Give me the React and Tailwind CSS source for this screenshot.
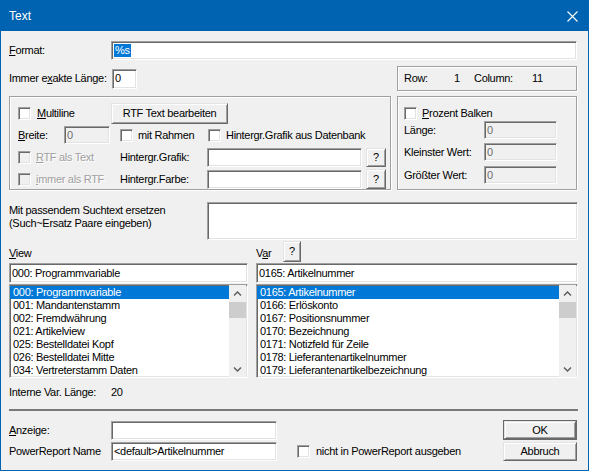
import React from 'react';

const sunken = 'border border-t-[#a0a0a0] border-l-[#a0a0a0] border-r-white border-b-white shadow-[inset_1px_1px_0_#696969,inset_-1px_-1px_0_#e3e3e3]';
const raised = 'border border-t-[#e3e3e3] border-l-[#e3e3e3] border-r-[#696969] border-b-[#696969] shadow-[inset_1px_1px_0_#fff,inset_-1px_-1px_0_#a0a0a0] bg-[#f0f0f0]';
const etched = 'border border-[#a0a0a0] shadow-[inset_1px_1px_0_#fff,1px_1px_0_#fff]';
const dim = 'text-[#a0a0a0] [text-shadow:1px_1px_0_#fff]';

const viewItems = [
  '000: Programmvariable',
  '001: Mandantenstamm',
  '002: Fremdwährung',
  '021: Artikelview',
  '025: Bestelldatei Kopf',
  '026: Bestelldatei Mitte',
  '034: Vertreterstamm Daten',
];

const varItems = [
  '0165: Artikelnummer',
  '0166: Erlöskonto',
  '0167: Positionsnummer',
  '0170: Bezeichnung',
  '0171: Notizfeld für Zeile',
  '0178: Lieferantenartikelnummer',
  '0179: Lieferantenartikelbezeichnung',
];

function Edit({ className = '', disabled, children }) {
  return (
    <div className={`box-border flex items-center pl-[2px] overflow-hidden whitespace-nowrap shrink-0 ${sunken} ${disabled ? 'bg-[#f0f0f0] text-[#6d6d6d]' : 'bg-white'} ${className}`}>
      {children}
    </div>
  );
}

function Check({ disabled }) {
  return <span className={`box-border block w-[13px] h-[13px] shrink-0 ${sunken} ${disabled ? 'bg-[#f0f0f0]' : 'bg-white'}`} />;
}

function Button({ className = '', children }) {
  return <div className={`box-border flex items-center justify-center shrink-0 ${raised} ${className}`}>{children}</div>;
}

function Chevron({ down }) {
  return (
    <svg width="9" height="6" viewBox="0 0 9 6">
      <polyline
        points={down ? '1,1.5 4.5,5 8,1.5' : '1,4.5 4.5,1 8,4.5'}
        fill="none"
        stroke="#606060"
        strokeWidth="1.5"
      />
    </svg>
  );
}

function ListBox({ items, className = '' }) {
  return (
    <div className={`box-border flex bg-white overflow-hidden shrink-0 ${sunken} ${className}`}>
      <div className="flex-1 pt-[1px] overflow-hidden">
        {items.map((it, i) => (
          <div key={it} className={`h-[13px] leading-[13px] pl-[3px] whitespace-nowrap ${i === 0 ? 'bg-[#0078d7] text-white' : ''}`}>
            {it}
          </div>
        ))}
      </div>
      <div className="w-[17px] flex flex-col bg-[#f0f0f0] mr-[1px]">
        <div className="h-[17px] flex items-center justify-center"><Chevron /></div>
        <div className="h-[16px] bg-[#cdcdcd]" />
        <div className="flex-1" />
        <div className="h-[17px] flex items-center justify-center"><Chevron down /></div>
      </div>
    </div>
  );
}

export default function App() {
  return (
    <div className="w-[589px] h-[471px] box-border border border-[#0063b1] bg-[#f0f0f0] overflow-hidden font-['Liberation_Sans',Arial,sans-serif] text-[11px] leading-[13px] tracking-[-0.3px] text-black">
      <div className="h-[30px] bg-[#0063b1] flex items-center pl-[8px] pr-[10px] text-white">
        <span className="text-[12px] tracking-normal">Text</span>
        <svg className="ml-auto" width="11" height="11" viewBox="0 0 11 11">
          <path d="M0.5 0.5 L10.5 10.5 M10.5 0.5 L0.5 10.5" stroke="#fff" strokeWidth="1.1" />
        </svg>
      </div>

      <div className="flex flex-col pl-[8px]">
        {/* Format */}
        <div className="mt-[10px] h-[19px] flex items-center">
          <span className="w-[102px]"><u>F</u>ormat:</span>
          <Edit className="w-[466px] h-[19px] pl-[2px]">
            <span className="bg-[#0078d7] text-white px-[1px]">%s</span>
          </Edit>
        </div>

        {/* exakte Länge + Row/Column */}
        <div className="mt-[6px] h-[25px] flex items-center">
          <div className="w-[388px] flex items-center">
            <span className="w-[103px]">Immer e<u>x</u>akte Länge:</span>
            <Edit className="w-[25px] h-[20px]">0</Edit>
          </div>
          <div className={`box-border w-[180px] h-[25px] flex items-center pl-[6px] ${etched}`}>
            <span className="w-[50px]">Row:</span>
            <span className="w-[20px]">1</span>
            <span className="w-[58px]">Column:</span>
            <span>11</span>
          </div>
        </div>

        {/* group boxes */}
        <div className="mt-[5px] h-[94px] flex gap-[6px]">
          <div className={`box-border w-[382px] h-[94px] pl-[8px] pt-[6px] ${etched}`}>
            <div className="h-[21px] flex items-center">
              <div className="w-[93px] flex items-center gap-[6px]">
                <Check />
                <span><u>M</u>ultiline</span>
              </div>
              <Button className="w-[117px] h-[21px]">RTF Text bearbeiten</Button>
            </div>
            <div className="mt-[2px] h-[18px] flex items-center">
              <span className="w-[46px]"><u>B</u>reite:</span>
              <Edit disabled className="w-[46px] h-[18px]">0</Edit>
              <div className="ml-[10px] w-[88px] flex items-center gap-[5px]">
                <Check />
                <span>mit Rahmen</span>
              </div>
              <div className="flex items-center gap-[5px] whitespace-nowrap">
                <Check />
                <span>Hintergr.Grafik aus Datenbank</span>
              </div>
            </div>
            <div className="mt-[4px] h-[19px] flex items-center">
              <div className="w-[102px] flex items-center gap-[5px]">
                <Check disabled />
                <span className={dim}><u>R</u>TF als Text</span>
              </div>
              <span className="w-[87px]">Hintergr.Grafik:</span>
              <Edit className="w-[155px] h-[19px]" />
              <Button className="ml-[4px] w-[20px] h-[19px]">?</Button>
            </div>
            <div className="mt-[2px] h-[20px] flex items-center">
              <div className="w-[102px] flex items-center gap-[5px]">
                <Check disabled />
                <span className={dim}><u>i</u>mmer als RTF</span>
              </div>
              <span className="w-[87px]">Hintergr.Farbe:</span>
              <Edit className="w-[155px] h-[19px]" />
              <Button className="ml-[4px] w-[20px] h-[20px]">?</Button>
            </div>
          </div>

          <div className={`box-border w-[180px] h-[94px] pl-[6px] pt-[10px] ${etched}`}>
            <div className="h-[13px] flex items-center gap-[5px]">
              <Check />
              <span><u>P</u>rozent Balken</span>
            </div>
            <div className="mt-[1px] h-[18px] flex items-center">
              <span className="w-[80px]">Länge:</span>
              <Edit disabled className="w-[73px] h-[18px]">0</Edit>
            </div>
            <div className="mt-[4px] h-[18px] flex items-center">
              <span className="w-[80px]">Kleinster Wert:</span>
              <Edit disabled className="w-[73px] h-[18px]">0</Edit>
            </div>
            <div className="mt-[5px] h-[18px] flex items-center">
              <span className="w-[80px]">Größter Wert:</span>
              <Edit disabled className="w-[73px] h-[18px]">0</Edit>
            </div>
          </div>
        </div>

        {/* Suchtext */}
        <div className="mt-[12px] h-[38px] flex">
          <div className="w-[198px] pt-[2px]">
            <div>Mit passendem Suchtext ersetzen</div>
            <div>(Such~Ersatz Paare eingeben)</div>
          </div>
          <Edit className="w-[371px] h-[38px]" />
        </div>

        {/* View / Var labels */}
        <div className="mt-[1px] h-[21px] flex items-center">
          <span className="w-[247px] pt-[3px]"><u>V</u>iew</span>
          <span className="w-[27px] pt-[3px]">V<u>a</u>r</span>
          <Button className="w-[18px] h-[21px]">?</Button>
        </div>

        <div className="mt-[1px] h-[20px] flex gap-[8px]">
          <Edit className="w-[239px] h-[20px]">000: Programmvariable</Edit>
          <Edit className="w-[322px] h-[20px]">0165: Artikelnummer</Edit>
        </div>

        <div className="mt-[1px] h-[94px] flex gap-[8px]">
          <ListBox items={viewItems} className="w-[239px] h-[94px]" />
          <ListBox items={varItems} className="w-[322px] h-[94px]" />
        </div>

        <div className="mt-[8px] h-[13px] flex items-center">
          <span className="w-[102px]">Interne Var. Länge:</span>
          <span>20</span>
        </div>

        <div className="mt-[10px] w-[569px] h-[2px] bg-[#7a7a7a]" />

        <div className="mt-[9px] w-[568px] h-[20px] flex items-center">
          <span className="w-[102px]"><u>A</u>nzeige:</span>
          <Edit className="w-[166px] h-[19px]" />
          <div className="ml-auto border border-[#696969] box-border w-[74px] h-[20px] flex">
            <Button className="flex-1 h-full">OK</Button>
          </div>
        </div>

        <div className="mt-[2px] w-[568px] h-[19px] flex items-center">
          <span className="w-[102px]">PowerReport Name</span>
          <Edit className="w-[166px] h-[19px]">&lt;default&gt;Artikelnummer</Edit>
          <div className="ml-[20px] flex items-center gap-[6px]">
            <Check />
            <span>nicht in PowerReport ausgeben</span>
          </div>
          <Button className="ml-auto w-[74px] h-[19px]">Abbruch</Button>
        </div>
      </div>
    </div>
  );
}
